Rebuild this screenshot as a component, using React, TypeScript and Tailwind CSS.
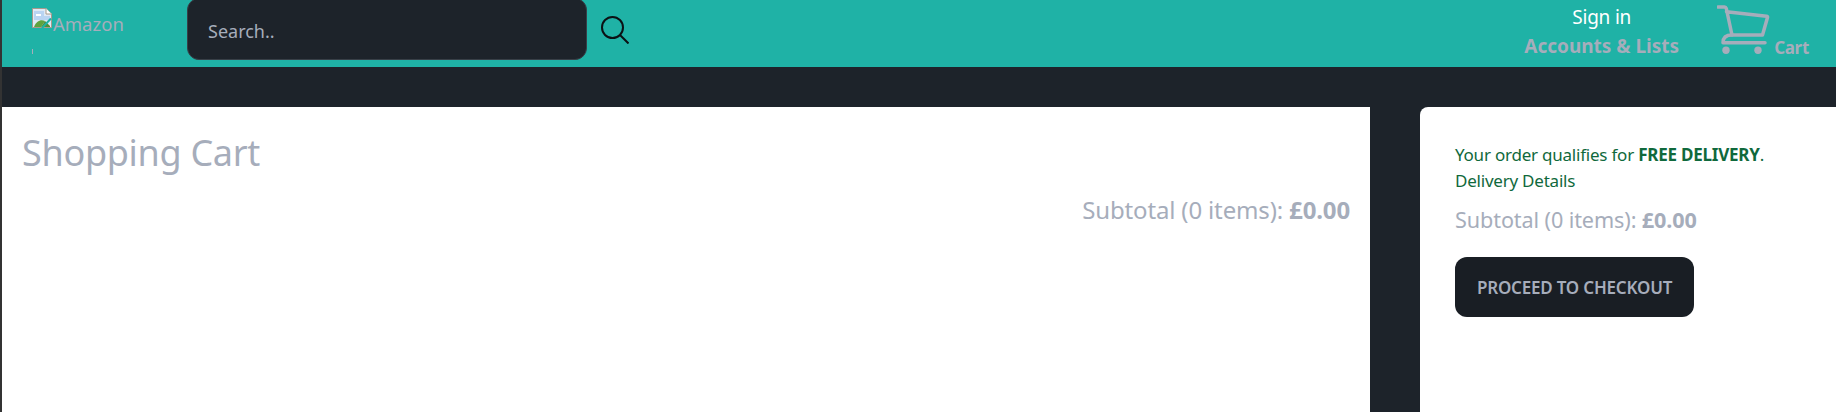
import { useState } from 'react';

const font = 'font-["Noto_Sans","Open_Sans",sans-serif]';

function BrokenImage() {
  return (
    <svg width="20" height="20" viewBox="0 0 20 20" className="shrink-0">
      <path d="M0.5 0.5H14L19.5 6V19.5H0.5Z" fill="#dfe9f5" stroke="#a89a8c" />
      <path d="M14 0.5V6H19.5" fill="#fff" stroke="#a89a8c" />
      <path d="M2 3H12V8L18 8V12H2Z" fill="#b9d4f2" />
      <path d="M4 6h5v2H4z" fill="#fff" />
      <path d="M2 19C4 13 9 11 13 13L9 19Z" fill="#5fa33e" />
      <path d="M13 13L18 18V19H9Z" fill="#4f8f36" />
      <path d="M10 20L19 10.500" stroke="#1fb2a6" strokeWidth="2" />
    </svg>
  );
}

function CartIcon() {
  return (
    <svg width="53" height="50" viewBox="0 0 53 50" fill="#a6adbb" stroke="none">
      <g fill="none" stroke="#a6adbb" strokeWidth="3.500" strokeLinecap="round" strokeLinejoin="round">
        <path d="M1 2H7.500C8.500 2 9 2.500 9.300 3.500L15 30H45.500L50.500 12.500C50.700 11.800 50.400 11.400 49.500 11.300L9.500 6.700" />
        <path d="M15 30C10 30 6 32 6 37.700H48" />
      </g>
      <circle cx="9" cy="45.300" r="3.700" />
      <circle cx="41" cy="45.300" r="3.700" />
    </svg>
  );
}

export default function App() {
  const [query, setQuery] = useState('');

  return (
    <div className={`h-[412px] overflow-hidden bg-[#333333] pl-[2px] ${font}`}>
      <header className="flex h-[67px] bg-[#1fb2a6] text-[#a6adbb]">
        {/* Logo (broken image) */}
        <a href="#" className="ml-[30px] flex w-[155px] shrink-0 flex-col pt-2">
          <span className="flex items-start">
            <BrokenImage />
            <span className="ml-px mt-[4px] text-[18.500px] leading-6">Amazon</span>
          </span>
          <span className="mt-[13px] h-[5px] w-px bg-[#a6adbb]" />
        </a>

        {/* Search */}
        <div className="flex items-start">
          <input
            value={query}
            onChange={(e) => setQuery(e.target.value)}
            placeholder="Search.."
            className="h-[62px] w-[400px] -translate-y-0.5 rounded-xl border border-[#383f47] bg-[#1d232a] px-5 pt-[3px] text-[18px] text-[#a6adbb] outline-none placeholder:text-[#a6adbb]"
          />
          <button type="button" className="ml-[14px] mt-4">
            <svg width="28" height="28" viewBox="0 0 28 28" fill="none" stroke="#0b1114" strokeWidth="2">
              <circle cx="11.500" cy="11.500" r="10.500" />
              <path d="M19 19L27.500 27.500" />
            </svg>
          </button>
        </div>

        {/* Account and cart */}
        <div className="ml-auto flex items-start pr-[27px]">
          <a href="#" className="mt-[4px] flex flex-col items-center">
            <span className="text-[19px] leading-[26px] tracking-[-0.2px] text-white">Sign in</span>
            <span className="mt-[3px] text-[19px] font-bold leading-[26px]">Accounts &amp; Lists</span>
          </a>
          <a href="#" className="ml-[38px] mt-[5px] flex items-start">
            <CartIcon />
            <span className="ml-[4px] mt-[33px] text-[17px] font-bold leading-5 tracking-[-0.3px]">Cart</span>
          </a>
        </div>
      </header>

      <main className="flex h-[345px] gap-[50px] bg-[#1d232a] pt-10">
        {/* Cart */}
        <section className="w-[1368px] shrink-0 bg-white px-5 pt-[20px] text-[#a6adbb]">
          <h1 className="text-[36px] font-normal leading-[52px] tracking-[-0.3px]">Shopping Cart</h1>
          <p className="mt-[15px] text-right text-[24px] font-normal leading-8 tracking-[-0.15px]">
            Subtotal (0 items): <span className="font-bold">£0.00</span>
          </p>
        </section>

        {/* Checkout summary */}
        <aside className="flex-1 rounded-tl-lg bg-white pl-[35px] pt-[35px]">
          <p className="text-[17px] leading-[26px] tracking-[-0.22px] text-[#10693c]">
            Your order qualifies for <span className="font-bold">FREE DELIVERY</span>.
            <br />
            Delivery Details
          </p>
          <p className="mt-[11px] text-[21.600px] font-normal leading-[30px] tracking-[-0.1px] text-[#a6adbb]">
            Subtotal (0 items): <span className="font-bold">£0.00</span>
          </p>
          <button
            type="button"
            className="mt-[22px] h-[60px] w-[239px] rounded-xl bg-[#191e24] pt-px text-[17px] font-semibold tracking-[-0.2px] text-[#a6adbb]"
          >
            PROCEED TO CHECKOUT
          </button>
        </aside>
      </main>
    </div>
  );
}
